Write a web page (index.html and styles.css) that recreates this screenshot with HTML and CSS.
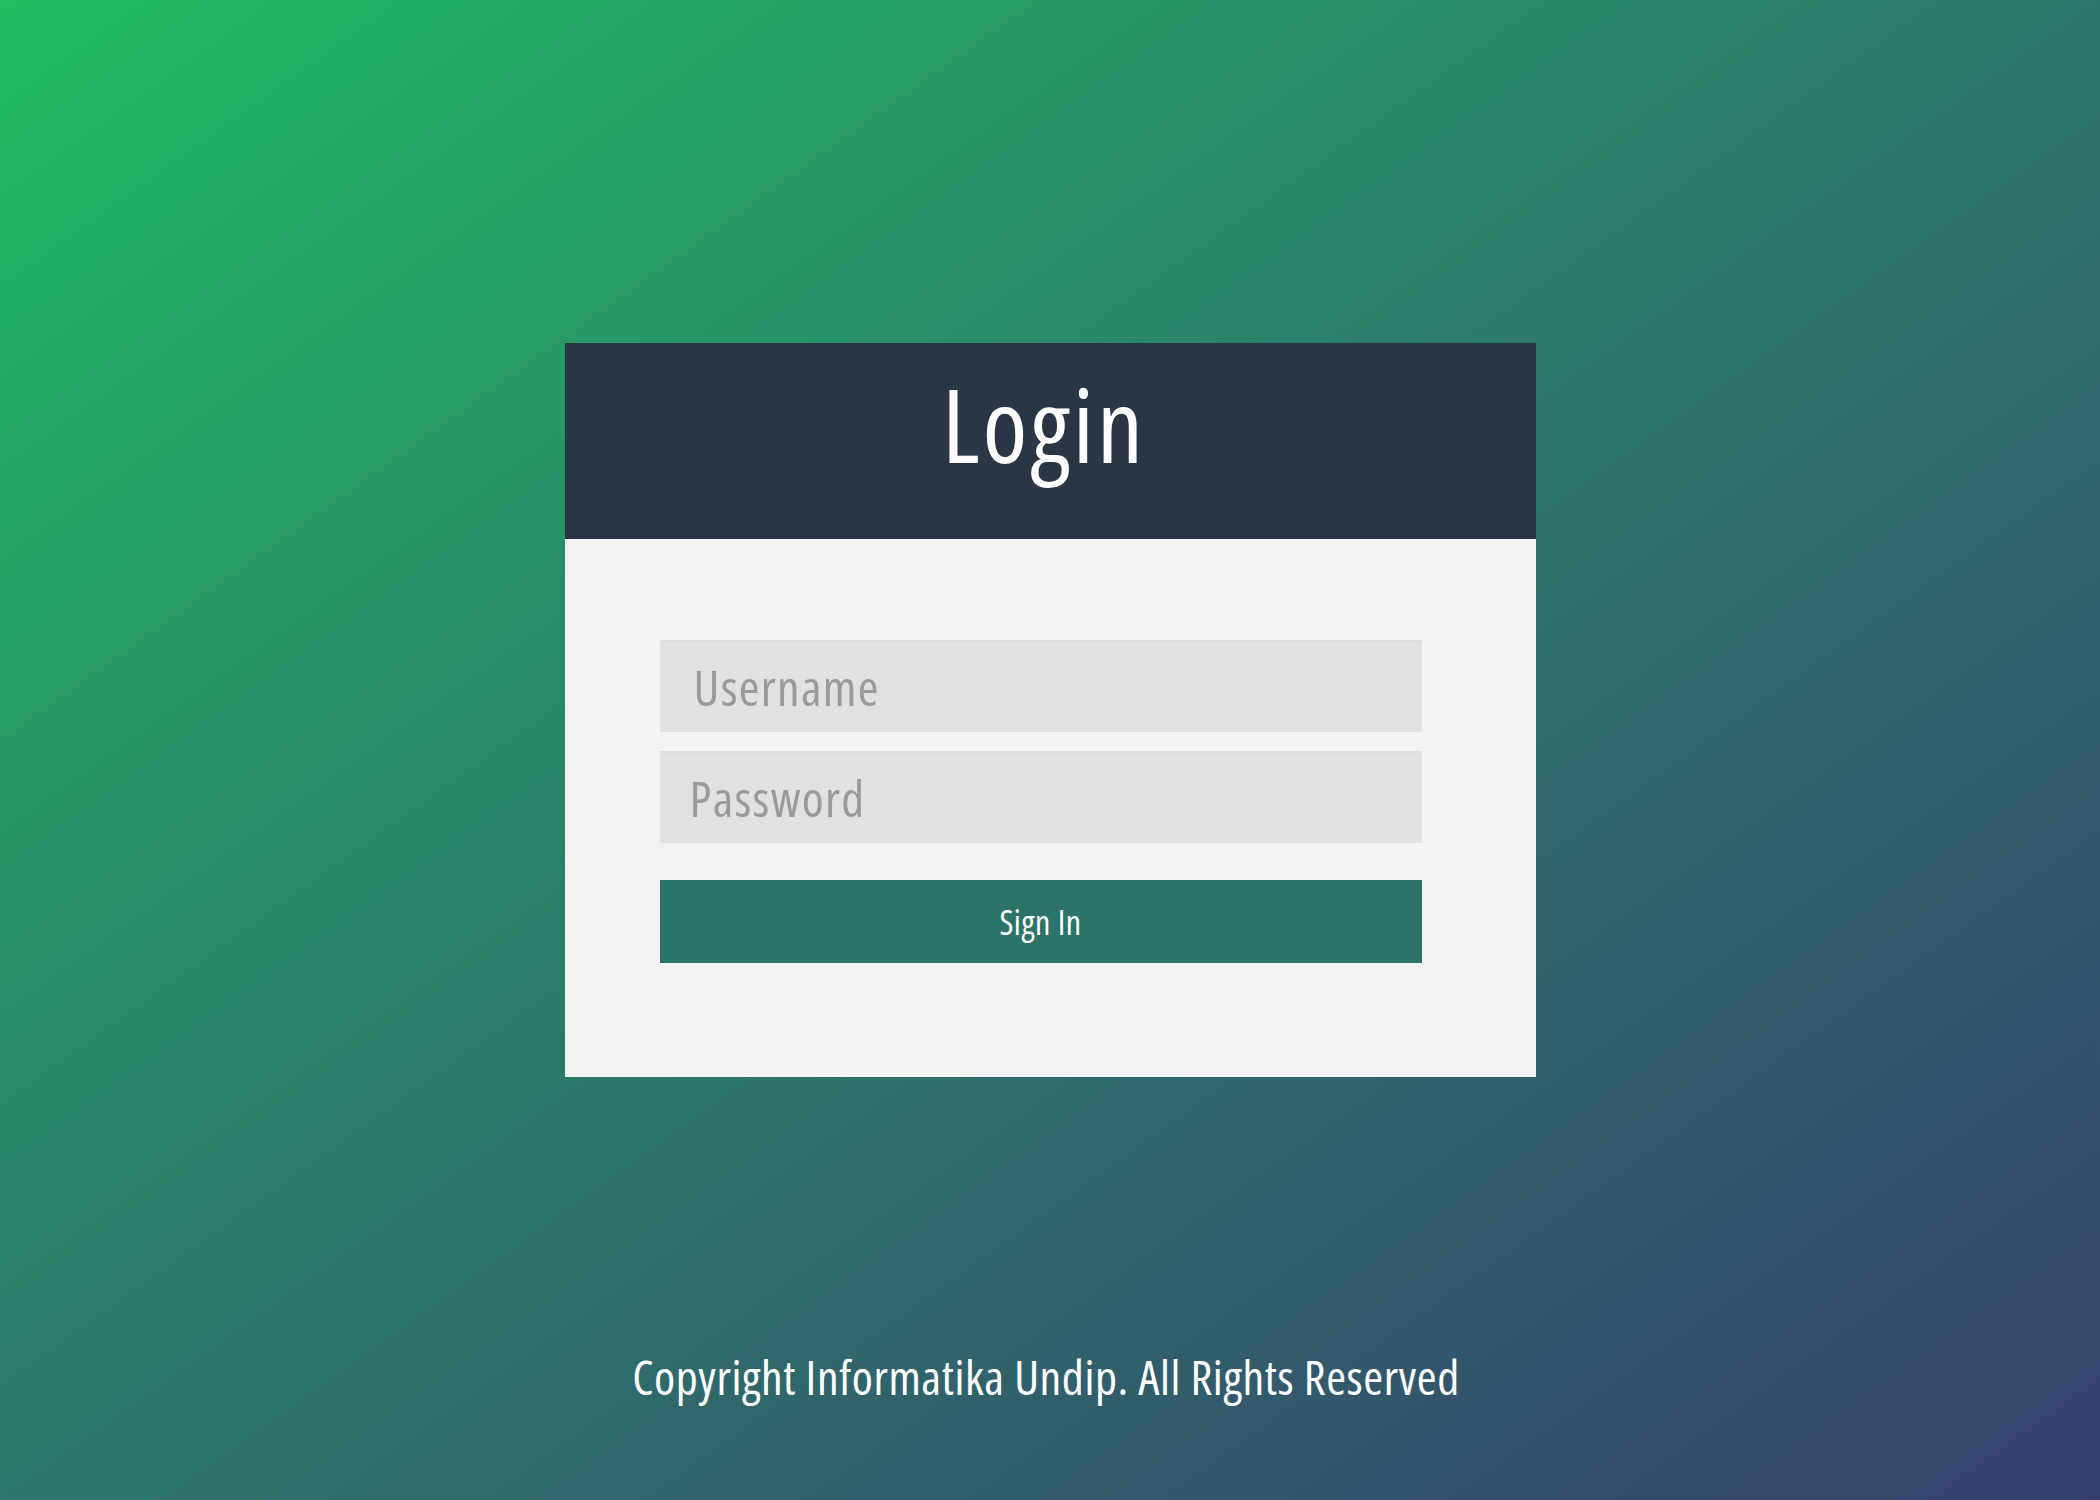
FILE: index.html
```html
<!DOCTYPE html>
<html lang="id">
<head>
<meta charset="utf-8">
<title>Login</title>
<link rel="stylesheet" href="styles.css">
</head>
<body>
<main class="page">
  <section class="card">
    <header class="card-head"><h1 class="title">Login</h1></header>
    <form class="card-body">
      <input class="field field-user" type="text" placeholder="Username">
      <input class="field field-pass" type="password" placeholder="Password">
      <button class="btn" type="button">Sign In</button>
    </form>
  </section>
  <footer class="copy">Copyright Informatika Undip. All Rights Reserved</footer>
</main>
</body>
</html>
```

FILE: styles.css
```css
html, body {
  margin: 0;
  padding: 0;
  height: 100%;
}
body {
  background: linear-gradient(to bottom right, #21bc64 0%, #2b7d6a 45%, #37406d 100%);
  font-family: "Open Sans", "Liberation Sans", Arial, sans-serif;
  font-stretch: 75%;
}
.page {
  display: flex;
  flex-direction: column;
  align-items: center;
  padding-top: 343px;
  min-height: 1500px;
  box-sizing: border-box;
}
.card {
  width: 971px;
  background: #f2f2f2;
}
.card-head {
  height: 196px;
  background: #283646;
  display: flex;
  align-items: center;
  justify-content: center;
  padding-right: 12px;
}
.title {
  margin: 0;
  color: #ffffff;
  font-weight: normal;
  font-stretch: 75%;
  font-size: 102px;
  letter-spacing: 3px;
  line-height: 1;
  position: relative;
  top: -17px;
}
.card-body {
  display: flex;
  flex-direction: column;
  gap: 19px;
  padding: 101px 114px 114px 95px;
  margin: 0;
}
.field {
  height: 92px;
  box-sizing: border-box;
  border: 0;
  border-top: 2px solid #dcdcdc;
  background: #e1e1e1;
  padding: 0 0 0 34px;
  font-family: inherit;
  font-stretch: 75%;
  font-size: 50px;
  letter-spacing: 1.3px;
  color: #555;
  outline: none;
}
.field-pass {
  padding-left: 30px;
}
.field::placeholder {
  color: #9a9a9a;
}
.btn {
  margin-top: 18px;
  height: 83px;
  border: 0;
  background: #2c7369;
  color: #ffffff;
  font-family: inherit;
  font-stretch: 75%;
  font-size: 34px;
  letter-spacing: 0.5px;
  padding: 0;
}
.copy {
  margin-top: 271px;
  padding-right: 8px;
  color: #ffffff;
  font-stretch: 75%;
  font-size: 48px;
  letter-spacing: 0.6px;
  line-height: 1.2;
}
```
